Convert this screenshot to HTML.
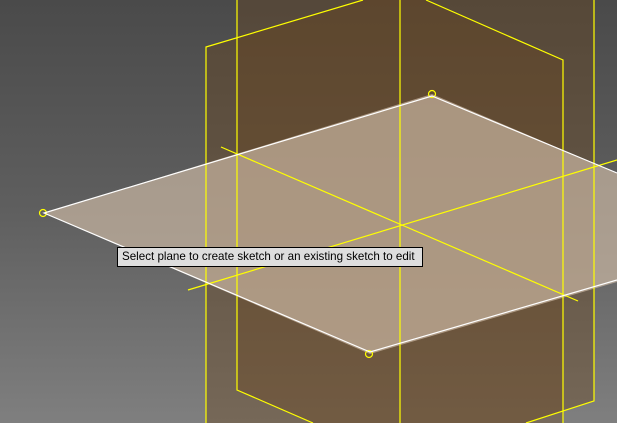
<!DOCTYPE html>
<html><head><style>
html,body{margin:0;padding:0;width:617px;height:423px;overflow:hidden}
body{background:linear-gradient(to bottom,#4a4a4a 0%,#5f5f5f 50%,#7f7f7f 100%);position:relative;font-family:"Liberation Sans",sans-serif}
svg{position:absolute;left:0;top:0}
.tip{position:absolute;left:117px;top:247px;height:20px;background:#dedede;border:1px solid #000;font-size:11.6px;line-height:18px;padding-left:4px;box-sizing:border-box;color:#000;white-space:nowrap;width:306px}
</style></head><body>
<svg width="617" height="423" viewBox="0 0 617 423">
<polygon points="206,47 363,0 594,0 594,401 526,423 206,423" fill="rgba(105,70,30,0.4)"/>
<polygon points="237,0 426,0 563,60 563,423 313,423 237,390" fill="rgba(105,70,30,0.35)"/>
<polygon points="44,213 432,94 617,173 617,282 370,354" fill="rgba(205,185,165,0.68)"/>
<g stroke="#ffff00" stroke-width="1.2" fill="none">
<polyline points="206,423 206,47 363,0"/>
<polyline points="594,0 594,401 526,423"/>
<polyline points="237,0 237,390 313,423"/>
<polyline points="426,0 563,60 563,423"/>
<line x1="400" y1="0" x2="400" y2="423"/>
<line x1="221" y1="147" x2="578" y2="301"/>
<line x1="188" y1="290" x2="617" y2="160"/>
<circle cx="432" cy="94" r="3.5"/>
<circle cx="43" cy="213" r="3.5"/>
<circle cx="369" cy="354" r="3.5"/>
</g>
<g stroke="#ffffff" stroke-width="1.2" fill="none">
<polyline points="617,173 432,96 44,213 370,352 617,280"/>
</g>
</svg>
<div class="tip">Select plane to create sketch or an existing sketch to edit</div>
</body></html>
